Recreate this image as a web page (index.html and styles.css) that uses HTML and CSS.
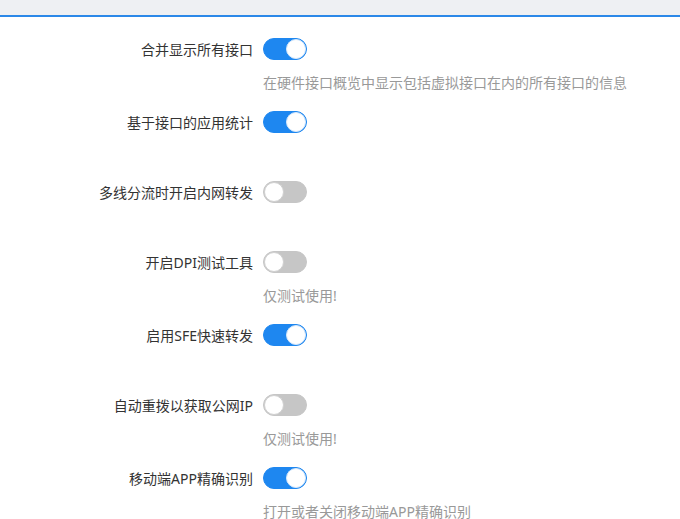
FILE: index.html
```html
<!DOCTYPE html>
<html lang="zh-CN">
<head>
<meta charset="utf-8">
<title>设置</title>
<link rel="stylesheet" href="styles.css">
</head>
<body>
<div class="topbar"></div>
<div class="form">
  <div class="item">
    <div class="row"><label class="label">合并显示所有接口</label><span class="switch on"></span></div>
    <div class="desc">在硬件接口概览中显示包括虚拟接口在内的所有接口的信息</div>
  </div>
  <div class="item">
    <div class="row"><label class="label">基于接口的应用统计</label><span class="switch on"></span></div>
    <div class="desc empty"></div>
  </div>
  <div class="item">
    <div class="row"><label class="label">多线分流时开启内网转发</label><span class="switch"></span></div>
    <div class="desc empty"></div>
  </div>
  <div class="item">
    <div class="row"><label class="label">开启DPI测试工具</label><span class="switch"></span></div>
    <div class="desc">仅测试使用!</div>
  </div>
  <div class="item">
    <div class="row"><label class="label">启用SFE快速转发</label><span class="switch on"></span></div>
    <div class="desc empty"></div>
  </div>
  <div class="item">
    <div class="row"><label class="label">自动重拨以获取公网IP</label><span class="switch"></span></div>
    <div class="desc">仅测试使用!</div>
  </div>
  <div class="item">
    <div class="row"><label class="label">移动端APP精确识别</label><span class="switch on"></span></div>
    <div class="desc">打开或者关闭移动端APP精确识别</div>
  </div>
</div>
</body>
</html>
```
FILE: styles.css
```css
html, body {
  margin: 0;
  padding: 0;
  background: #fff;
  font-family: "Noto Sans", "Noto Sans CJK SC", sans-serif;
  font-size: 14px;
  overflow: hidden;
}
.topbar {
  height: 15px;
  background: #eef0f3;
  border-bottom: 2px solid #2b88e8;
}
.form {
  padding-top: 16px;
}
.item {
  margin-bottom: 13px;
}
.row {
  display: flex;
  align-items: center;
  height: 32px;
}
.label {
  width: 253px;
  text-align: right;
  color: #333;
  margin-right: 10px;
  white-space: nowrap;
}
.switch {
  position: relative;
  box-sizing: border-box;
  width: 44px;
  height: 22px;
  border-radius: 11px;
  background: #c6c6c6;
  border: 1px solid #c6c6c6;
}
.switch::after {
  content: "";
  position: absolute;
  box-sizing: border-box;
  top: 0;
  left: 0;
  width: 20px;
  height: 20px;
  border-radius: 50%;
  background: #fff;
  border: 1px solid #d0d0d0;
}
.switch.on {
  background: #1e87f0;
  border-color: #1e87f0;
}
.switch.on::after {
  left: 22px;
  border-color: #d6e8fb;
}
.desc {
  margin-top: 8px;
  margin-left: 263px;
  line-height: 20px;
  height: 20px;
  color: #999;
  white-space: nowrap;
}
.desc.empty {
  height: 17px;
}
```
